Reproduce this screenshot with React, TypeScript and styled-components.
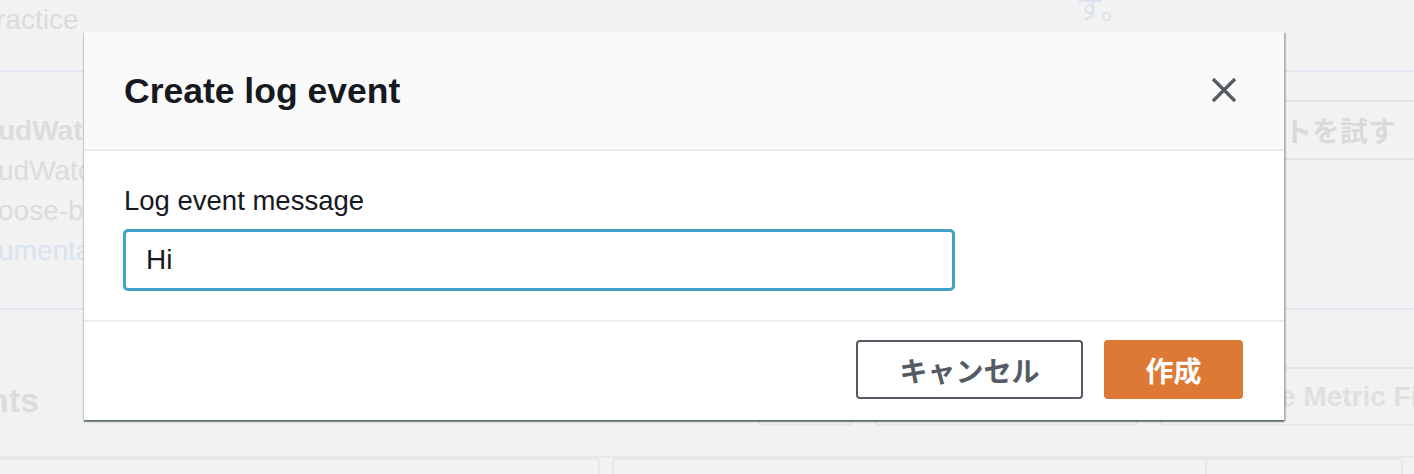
import styled, { createGlobalStyle } from "styled-components";

const GlobalStyle = createGlobalStyle`
  html, body {
    margin: 0;
    padding: 0;
    background: #f2f2f2;
    font-family: "Liberation Sans", "Noto Sans CJK JP", Arial, sans-serif;
  }
  * {
    box-sizing: border-box;
  }
`;

const Page = styled.div`
  position: relative;
  width: 1414px;
  height: 474px;
  overflow: hidden;
  background: #f2f2f2;
  color: #dcdcdc;
`;

const TopRow = styled.div`
  display: flex;
  height: 72px;
  border-bottom: 2px solid #e2e8f0;
`;

const Faded = styled.span<{ $bold?: boolean; $link?: boolean }>`
  display: block;
  font-size: 28px;
  line-height: 40px;
  font-weight: ${({ $bold }) => ($bold ? 700 : 400)};
  color: ${({ $link }) => ($link ? "#dae4ee" : "#dcdcdc")};
  white-space: nowrap;
`;

const TopLeft = styled.div`
  flex: 0 0 1080px;
  margin-left: -4px;
`;

const TopRight = styled.div`
  margin-top: -10px;
`;

const InfoRow = styled.div`
  display: flex;
  height: 238px;
  border-bottom: 2px solid #e2e8f0;
`;

const InfoText = styled.div`
  flex: 0 0 1270px;
  padding-top: 39px;
  margin-left: -2px;
`;

const InfoAside = styled.div`
  flex: 0 0 auto;
  padding-top: 28px;
`;

const GhostButton = styled.div`
  width: 260px;
  height: 60px;
  padding-left: 14px;
  border: 2px solid #e4e4e4;
  border-right: none;
  display: flex;
  align-items: center;
  font-size: 28px;
  font-weight: 700;
  color: #dadada;
  white-space: nowrap;
`;

const EventsRow = styled.div`
  display: flex;
  align-items: center;
  height: 148px;
  padding: 58px 0 31px;
  border-bottom: 2px solid #e8e8e8;
`;

const EventsTitle = styled.div`
  flex: 1;
  margin-left: -12px;
  padding-top: 8px;
  font-size: 34px;
  font-weight: 700;
  color: #dcdcdc;
`;

const Actions = styled.div`
  display: flex;
  flex-shrink: 0;
  gap: 22px;
  margin-right: -120px;
`;

const ActionBox = styled.div<{ $w: number; $pad?: number }>`
  width: ${({ $w }) => $w}px;
  height: 59px;
  border: 2px solid #e6e6e6;
  border-radius: 4px;
  display: flex;
  align-items: center;
  padding-left: ${({ $pad }) => $pad ?? 0}px;
  font-size: 28px;
  font-weight: 700;
  color: #e0e0e0;
  white-space: nowrap;
  overflow: hidden;
`;

const CardsRow = styled.div`
  display: flex;
  gap: 12px;
  margin-left: -20px;
`;

const Card = styled.div<{ $w: number }>`
  flex: 0 0 ${({ $w }) => $w}px;
  height: 40px;
  border: 2px solid #e8e8e8;
  border-bottom: none;
  border-radius: 4px 4px 0 0;
  display: flex;
  justify-content: flex-end;
`;

const CardSplit = styled.div`
  width: 196px;
  border-left: 2px solid #e8e8e8;
`;

const Overlay = styled.div`
  position: absolute;
  inset: 0;
  padding: 32px 0 0 84px;
`;

const Modal = styled.div`
  width: 1200px;
  background: #ffffff;
  box-shadow: 0 2px 1px rgba(0, 28, 36, 0.45), 2px 1px 1px rgba(0, 28, 36, 0.22),
    -1px 1px 1px rgba(0, 28, 36, 0.12);
`;

const Header = styled.div`
  height: 119px;
  display: flex;
  align-items: center;
  justify-content: space-between;
  padding: 0 47px 2px 40px;
  background: #fafafa;
  border-bottom: 2px solid #eaeded;
`;

const Title = styled.h2`
  margin: 4px 0 0;
  font-size: 35.5px;
  font-weight: 700;
  color: #16191f;
`;

const CloseButton = styled.button`
  width: 26px;
  height: 26px;
  padding: 0;
  border: none;
  background: none;
  display: flex;
  cursor: pointer;
`;

const Body = styled.div`
  padding: 30px 40px 29px 39px;
`;

const Label = styled.label`
  display: block;
  margin-left: 1px;
  font-size: 27.5px;
  line-height: 40px;
  color: #16191f;
`;

const Input = styled.input`
  display: block;
  margin-top: 8px;
  width: 832px;
  height: 62px;
  padding: 0 20px;
  border: 3px solid #44a1c8;
  border-radius: 5px;
  outline: none;
  font-family: inherit;
  font-size: 28px;
  color: #16191f;
  background: #ffffff;
`;

const Footer = styled.div`
  display: flex;
  justify-content: flex-end;
  gap: 21px;
  padding: 18px 41px 21px;
  border-top: 2px solid #eaeded;
`;

const Button = styled.button<{ $primary?: boolean }>`
  width: ${({ $primary }) => ($primary ? 139 : 227)}px;
  height: 59px;
  border-radius: 4px;
  border: 2px solid ${({ $primary }) => ($primary ? "#de7935" : "#545b64")};
  background: ${({ $primary }) => ($primary ? "#de7935" : "#ffffff")};
  color: ${({ $primary }) => ($primary ? "#ffffff" : "#545b64")};
  font-family: "Noto Sans CJK JP", sans-serif;
  font-size: 28px;
  font-weight: 700;
  cursor: pointer;
`;

function CloseIcon() {
  return (
    <svg width="26" height="26" viewBox="0 0 26 26" fill="none">
      <path d="M2 2L24 24M24 2L2 24" stroke="#545b64" strokeWidth="3.2" />
    </svg>
  );
}

export default function App() {
  return (
    <>
      <GlobalStyle />
      <Page>
        <TopRow>
          <TopLeft>
            <Faded>ractice</Faded>
          </TopLeft>
          <TopRight>
            <Faded $link>す。</Faded>
          </TopRight>
        </TopRow>
        <InfoRow>
          <InfoText>
            <Faded $bold>udWatc</Faded>
            <Faded>udWatc</Faded>
            <Faded>oose-bu</Faded>
            <Faded $link>umenta</Faded>
          </InfoText>
          <InfoAside>
            <GhostButton>トを試す</GhostButton>
          </InfoAside>
        </InfoRow>
        <EventsRow>
          <EventsTitle>nts</EventsTitle>
          <Actions>
            <ActionBox $w={94} />
            <ActionBox $w={264} />
            <ActionBox $w={374} $pad={118}>
              e Metric Fi
            </ActionBox>
          </Actions>
        </EventsRow>
        <CardsRow>
          <Card $w={620} />
          <Card $w={791}>
            <CardSplit />
          </Card>
        </CardsRow>
        <Overlay>
          <Modal role="dialog" aria-label="Create log event">
            <Header>
              <Title>Create log event</Title>
              <CloseButton aria-label="Close">
                <CloseIcon />
              </CloseButton>
            </Header>
            <Body>
              <Label htmlFor="msg">Log event message</Label>
              <Input id="msg" defaultValue="Hi" />
            </Body>
            <Footer>
              <Button>キャンセル</Button>
              <Button $primary>作成</Button>
            </Footer>
          </Modal>
        </Overlay>
      </Page>
    </>
  );
}
